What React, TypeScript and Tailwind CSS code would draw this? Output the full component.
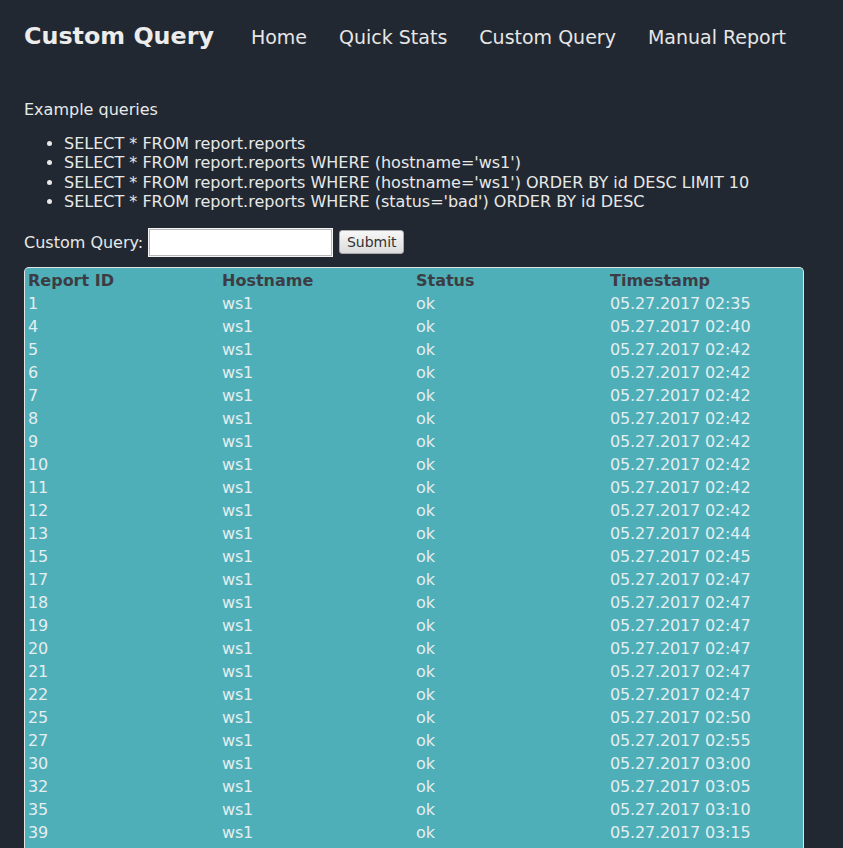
const rows: [number, string][] = [
  [1, '02:35'], [4, '02:40'], [5, '02:42'], [6, '02:42'], [7, '02:42'], [8, '02:42'],
  [9, '02:42'], [10, '02:42'], [11, '02:42'], [12, '02:42'], [13, '02:44'], [15, '02:45'],
  [17, '02:47'], [18, '02:47'], [19, '02:47'], [20, '02:47'], [21, '02:47'], [22, '02:47'],
  [25, '02:50'], [27, '02:55'], [30, '03:00'], [32, '03:05'], [35, '03:10'], [39, '03:15'],
  [40, '03:20'], [41, '03:25'],
]

const examples = [
  'SELECT * FROM report.reports',
  "SELECT * FROM report.reports WHERE (hostname='ws1')",
  "SELECT * FROM report.reports WHERE (hostname='ws1') ORDER BY id DESC LIMIT 10",
  "SELECT * FROM report.reports WHERE (status='bad') ORDER BY id DESC",
]

const nav = ['Home', 'Quick Stats', 'Custom Query', 'Manual Report']

export default function App() {
  return (
    <div className="min-h-screen bg-[#222831] text-[#e8e8e8] font-['DejaVu_Sans',sans-serif] text-[16px]">
      {/* Header */}
      <header className="h-[72px] flex items-center px-6 pt-[1px]">
        <h1 className="text-[23.8px] font-bold text-[#ececec] mr-[37px]">Custom Query</h1>
        <nav className="flex gap-[32px] text-[19px] text-[#e6e6e6] pt-[2px]">
          {nav.map((n) => (
            <a key={n} href="#">{n}</a>
          ))}
        </nav>
      </header>

      <main className="px-6">
        <p className="mt-[28px] leading-[19px]">Example queries</p>
        <ul className="list-disc pl-[40px] mt-[15px] leading-[19.3px]">
          {examples.map((q) => (
            <li key={q}>{q}</li>
          ))}
        </ul>

        {/* Query form */}
        <div className="mt-[16px] flex items-center h-[30px]">
          <label className="leading-[19px]">Custom Query:</label>
          <input
            type="text"
            className="ml-[5px] w-[185px] h-[29px] bg-white border border-[#f4f4f4] rounded-none outline outline-1 -outline-offset-2 outline-[#b8b8b8] px-1 text-black"
          />
          <button className="ml-[6px] w-[65px] h-[24px] rounded-[3px] border border-[#a9a9a9] bg-gradient-to-b from-[#f7f7f7] to-[#dcdcdc] text-[14px] text-[#333] leading-none">
            Submit
          </button>
        </div>

        {/* Results */}
        <div className="mt-[10px] w-[780px] border border-[#e4e4e4] border-b-0 rounded-t-[5px] bg-[#4fafb8] pl-[3px] pt-[1px]">
          <div className="grid grid-cols-[repeat(4,194px)] h-[23px] items-center font-bold text-[#3c3d44]">
            <div>Report ID</div>
            <div>Hostname</div>
            <div>Status</div>
            <div>Timestamp</div>
          </div>
          {rows.map(([id, t]) => (
            <div key={id} className="grid grid-cols-[repeat(4,194px)] h-[23px] items-center text-[#e4eef0] tracking-[-0.15px]">
              <div>{id}</div>
              <div>ws1</div>
              <div>ok</div>
              <div>05.27.2017 {t}</div>
            </div>
          ))}
        </div>
      </main>
    </div>
  )
}
